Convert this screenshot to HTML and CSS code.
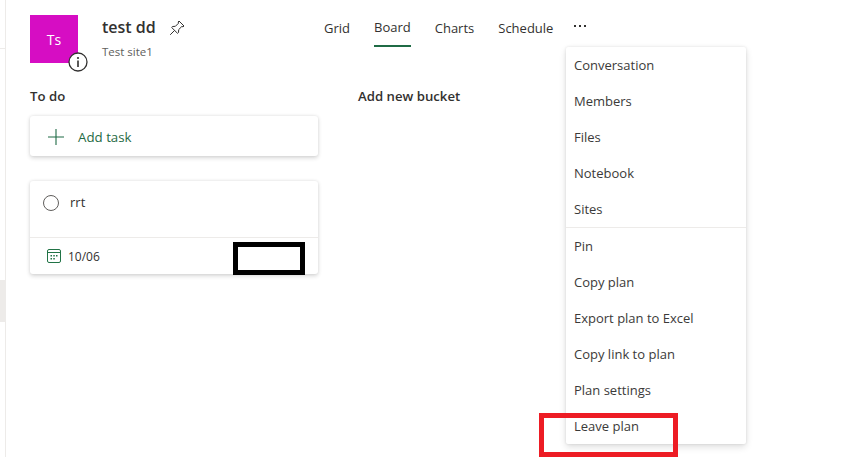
FILE: index.html
```html
<!DOCTYPE html>
<html lang="en">
<head>
<meta charset="utf-8">
<title>test dd - Board</title>
<link rel="stylesheet" href="styles.css">
</head>
<body>
<div class="page">
  <aside class="rail">
    <div class="rail-top"></div>
    <div class="rail-selected"></div>
  </aside>
  <main class="main">
    <header class="header">
      <div class="avatar">Ts
        <span class="info">
          <svg viewBox="0 0 20 20" width="20" height="20"><circle cx="10" cy="10" r="9" fill="#fff" stroke="#323130" stroke-width="1.3"/><circle cx="10" cy="6" r="1.1" fill="#323130"/><rect x="9.2" y="8.5" width="1.6" height="6.5" fill="#323130"/></svg>
        </span>
      </div>
      <div class="plan">
        <div class="plan-title">
          <h1>test dd</h1>
          <svg class="pin" viewBox="0 0 16 16" width="16" height="16"><path d="M10 1l5 5-1 .8-1.2-.3L9.7 9.6 9.5 12.5 8.5 13.3 2.7 7.5l.8-1 2.9-.2 3.1-3.1-.3-1.2zM5.500 10.500L1.200 14.800" fill="none" stroke="#323130" stroke-width="1"/></svg>
        </div>
        <div class="plan-site">Test site1</div>
      </div>
      <nav class="tabs">
        <a class="tab">Grid</a>
        <a class="tab active">Board</a>
        <a class="tab">Charts</a>
        <a class="tab">Schedule</a>
        <a class="more"><i></i><i></i><i></i></a>
      </nav>
    </header>
    <section class="board">
      <div class="bucket">
        <h2>To do</h2>
        <div class="card add">
          <svg viewBox="0 0 16 16" width="16" height="16"><path d="M8 0v16M0 8h16" stroke="#1f6b45" stroke-width="1.1" fill="none"/></svg>
          <span>Add task</span>
        </div>
        <div class="card task">
          <div class="task-main">
            <span class="check"></span>
            <span class="task-name">rrt</span>
          </div>
          <div class="task-foot">
            <svg viewBox="0 0 14 14" width="14" height="14"><rect x=".5" y=".5" width="13" height="13" rx="1.5" fill="none" stroke="#217346"/><path d="M.5 3.500h13" stroke="#217346"/><path d="M3.500 6h1.500v1.500h-1.500zM6.300 6h1.500v1.500h-1.500zM9 6h1.500v1.500h-1.500zM3.500 9h1.500v1.500h-1.500zM6.300 9h1.500v1.500h-1.500z" fill="#217346"/></svg>
            <span>10/06</span>
          </div>
        </div>
      </div>
      <h2 class="new-bucket">Add new bucket</h2>
    </section>
  </main>
</div>
<div class="menu">
  <ul class="menu-group">
    <li>Conversation</li>
    <li>Members</li>
    <li>Files</li>
    <li>Notebook</li>
    <li>Sites</li>
  </ul>
  <ul class="menu-group">
    <li>Pin</li>
    <li>Copy plan</li>
    <li>Export plan to Excel</li>
    <li>Copy link to plan</li>
    <li>Plan settings</li>
    <li>Leave plan</li>
  </ul>
</div>
<div class="mark mark-black"></div>
<div class="mark mark-red"></div>
</body>
</html>
```
FILE: styles.css
```css
* { box-sizing: border-box; }
html, body { margin: 0; height: 100%; overflow: hidden; background: #fff; }
body { font-family: "Open Sans", "Liberation Sans", sans-serif; color: #323130; font-size: 13px; }
.page { display: flex; height: 457px; }
.rail { width: 6px; border-right: 1px solid #edebe9; flex: none; }
.rail-top { height: 49px; border-bottom: 1px solid #edebe9; }
.rail-selected { height: 42px; margin-top: 231px; background: #edebe9; }
.main { flex: 1; padding: 15px 0 0 24px; }
.header { display: flex; height: 59px; }
.avatar { position: relative; width: 48px; height: 48px; background: #d60dc3; color: #fff; font-size: 14px; display: flex; align-items: center; justify-content: center; flex: none; }
.info { position: absolute; left: 38px; top: 37px; width: 20px; height: 20px; display: block; }
.info svg { display: block; }
.plan { margin-left: 24px; width: 222px; flex: none; }
.plan-title { display: flex; align-items: center; gap: 13px; height: 25px; }
h1 { margin: 0; font-size: 16px; font-weight: 600; line-height: 25px; }
.plan-site { font-size: 11.5px; color: #605e5c; line-height: 16px; margin-top: 4px; }
.tabs { display: flex; gap: 24px; height: 33px; margin-top: -1px; }
.tab { font-size: 13px; line-height: 26px; height: 33px; color: #323130; position: relative; top: 1px; }
.tab.active { border-bottom: 2px solid #1f6b45; top: 0; }
.more { display: flex; gap: 3px; height: 24px; align-items: center; margin-left: -3px; }
.more i { width: 2px; height: 2px; background: #323130; display: block; }
.board { display: flex; padding-top: 14px; }
.bucket { width: 288px; flex: none; }
h2 { margin: 0; font-size: 13.2px; font-weight: 600; line-height: 16px; }
.new-bucket { margin-left: 40px; }
.card { background: #fff; border-radius: 3px; box-shadow: 0 1.6px 4px rgba(0,0,0,.16), 0 0 3px rgba(0,0,0,.06); }
.add { margin-top: 12px; height: 40px; display: flex; align-items: center; padding-left: 18px; gap: 14px; color: #1f6b45; font-size: 13.3px; line-height: 18px; padding-top: 1px; }
.task { margin-top: 25px; height: 93px; display: flex; flex-direction: column; }
.task-main { height: 57px; border-bottom: 1px solid #edebe9; display: flex; align-items: flex-start; padding: 14px 0 0 13px; gap: 11px; }
.check { width: 16px; height: 16px; border: 1px solid #605e5c; border-radius: 50%; flex: none; }
.task-name { line-height: 14px; font-size: 13px; }
.task-foot { flex: 1; display: flex; align-items: center; padding-left: 17px; gap: 7px; font-size: 12px; }
.task-foot svg { flex: none; }
.menu { position: absolute; left: 566px; top: 47px; width: 180px; background: #fff; border-radius: 2px; box-shadow: 0 3px 7px rgba(0,0,0,.13), 0 0 3px rgba(0,0,0,.11); }
.menu-group { list-style: none; margin: 0; padding: 0; }
.menu-group + .menu-group { border-top: 1px solid #edebe9; }
.menu li { height: 36px; line-height: 36px; padding-left: 8px; font-size: 13px; color: #3b3a39; white-space: nowrap; }
.mark { position: absolute; background: transparent; }
.mark-black { left: 233px; top: 242px; width: 72px; height: 33px; border: 5px solid #000; }
.mark-red { left: 539px; top: 413px; width: 139px; height: 44px; border: 5px solid #ed1c24; }
```
